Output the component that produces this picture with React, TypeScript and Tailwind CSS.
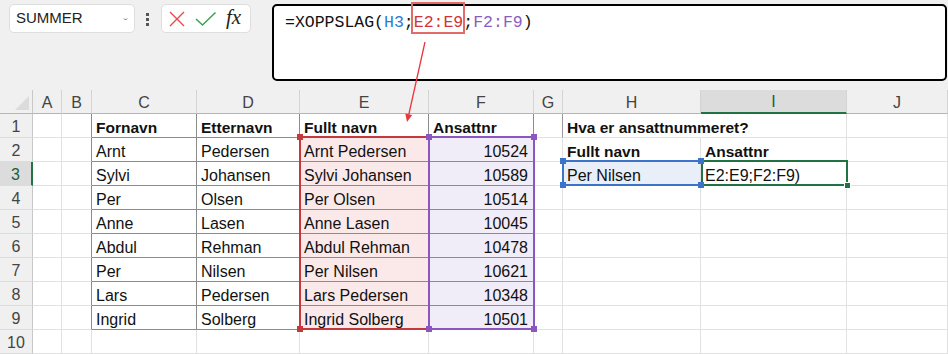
import React from 'react'

type Cell = { t?: string; b?: boolean; num?: boolean }

const cols = ['A', 'B', 'C', 'D', 'E', 'F', 'G', 'H', 'I', 'J']

const people = [
  ['Arnt', 'Pedersen', '10524'],
  ['Sylvi', 'Johansen', '10589'],
  ['Per', 'Olsen', '10514'],
  ['Anne', 'Lasen', '10045'],
  ['Abdul', 'Rehman', '10478'],
  ['Per', 'Nilsen', '10621'],
  ['Lars', 'Pedersen', '10348'],
  ['Ingrid', 'Solberg', '10501'],
]

function buildRows(): Cell[][] {
  const rows: Cell[][] = []
  rows.push([
    {}, {},
    { t: 'Fornavn', b: true },
    { t: 'Etternavn', b: true },
    { t: 'Fullt navn', b: true },
    { t: 'Ansattnr', b: true },
    {},
    { t: 'Hva er ansattnummeret?', b: true },
    {}, {},
  ])
  people.forEach(([first, last, nr], i) => {
    const row: Cell[] = [{}, {}, { t: first }, { t: last }, { t: `${first} ${last}` }, { t: nr, num: true }, {}, {}, {}, {}]
    if (i === 0) {
      row[7] = { t: 'Fullt navn', b: true }
      row[8] = { t: 'Ansattnr', b: true }
    }
    if (i === 1) {
      row[7] = { t: 'Per Nilsen' }
      row[8] = { t: 'E2:E9;F2:F9)' }
    }
    rows.push(row)
  })
  rows.push(Array.from({ length: 10 }, () => ({})))
  return rows
}

function cellClass(r: number, c: number) {
  // r is 1-based row, c is 0-based column (A = 0)
  const inTable = r >= 1 && r <= 9 && c >= 2 && c <= 5
  const leftOfTable = r >= 1 && r <= 9 && c === 1
  let right = 'border-r-[#e1e1e1]'
  let bottom = 'border-b-[#e1e1e1]'
  if (inTable) {
    right = 'border-r-[#8c8c8c]'
    bottom = 'border-b-[#8c8c8c]'
  }
  if (leftOfTable) right = 'border-r-[#8c8c8c]'
  if (r === 1 && c === 6) right = 'border-r-[#9a9a9a]'
  if (r === 1 && c === 7) right = 'border-r-transparent'
  let bg = ''
  if (r >= 2 && r <= 9 && c === 4) bg = 'bg-[#fbe9e9]'
  if (r >= 2 && r <= 9 && c === 5) bg = 'bg-[#f0ecf8]'
  if (r === 3 && c === 7) bg = 'bg-[#e8eff9]'
  return `${right} ${bottom} ${bg}`
}

function Handle({ className }: { className: string }) {
  return <div className={`absolute w-[6px] h-[6px] ${className}`} />
}

export default function App() {
  const rows = buildRows()

  return (
    <div className="relative w-[948px] h-[354px] overflow-hidden bg-white font-['Liberation_Sans',Arial,sans-serif] text-[#111]">
      {/* Formula bar */}
      <div className="h-[90px] bg-[#f0f0f0] flex items-start pt-[4px] pl-[9px]">
        <div className="w-[126px] h-[29px] bg-white border border-[#dedede] rounded-[5px] flex items-center pl-[6px] pr-[6px]">
          <span className="text-[15px] text-[#222] flex-1">SUMMER</span>
          <svg width="5" height="5" viewBox="0 0 5 5" className="mb-[-2px]">
            <path d="M1 1.5 L2.5 3 L4 1.5" fill="none" stroke="#666" strokeWidth="1" />
          </svg>
        </div>
        <div className="ml-[11px] mt-[9px] flex flex-col gap-[2px]">
          <div className="w-[3px] h-[3px] bg-[#555]" />
          <div className="w-[3px] h-[3px] bg-[#555]" />
          <div className="w-[3px] h-[3px] bg-[#555]" />
        </div>
        <div className="ml-[12px] w-[90px] h-[29px] bg-white border border-[#dedede] rounded-[5px] flex items-center pl-[7px]">
          <svg width="16" height="16" viewBox="0 0 16 16">
            <path d="M1 1 L15 15 M15 1 L1 15" stroke="#e5484d" strokeWidth="1.4" fill="none" />
          </svg>
          <svg width="22" height="16" viewBox="0 0 22 16" className="ml-[10px]">
            <path d="M1 8 L7.5 14 L20.5 1.5" stroke="#3ca256" strokeWidth="1.5" fill="none" />
          </svg>
          <span className="ml-[9px] font-['Liberation_Serif',serif] italic text-[21px] leading-none text-[#222] mt-[-2px]">fx</span>
        </div>
        <div className="ml-[21px] flex-1 mr-[1px] h-[77px] bg-white border-2 border-black rounded-[5px] pl-[11px] pt-[7px]">
          <div className="font-['Liberation_Mono',monospace] text-[16.5px] leading-[20px] whitespace-nowrap">
            <span>=XOPPSLAG(</span>
            <span className="text-[#2a7ad5]">H3</span>
            <span>;</span>
            <span className="relative text-[#d13438]">
              E2:E9
              <span className="absolute left-[-3px] top-[-11px] w-[54px] h-[32px] border-2 border-[#e36b6b]" />
            </span>
            <span>;</span>
            <span className="text-[#8b5cc4]">F2:F9</span>
            <span>)</span>
          </div>
        </div>
      </div>

      {/* Grid */}
      <div className="grid grid-cols-[33px_29px_30px_105px_103px_129px_105px_29px_138px_146px_101px] auto-rows-[24px]">
        <div className="bg-[#f0f0f0] border-r border-b border-r-[#c8c8c8] border-b-[#b5b5b5] flex items-end justify-end pr-[3px] pb-[3px]">
          <svg width="14" height="14" viewBox="0 0 14 14">
            <path d="M14 0 L14 14 L0 14 Z" fill="#dcdcdc" />
          </svg>
        </div>
        {cols.map((c) => (
          <div
            key={c}
            className={`border-r border-r-[#d4d4d4] flex items-end justify-center pb-px text-[16px] leading-[18px] ${
              c === 'I'
                ? 'bg-[#dcdcdc] border-b-2 border-b-[#217346] text-[#1d5e3a]'
                : 'bg-[#f0f0f0] border-b border-b-[#b5b5b5] text-[#444]'
            }`}
          >
            {c}
          </div>
        ))}
        {rows.map((row, ri) => {
          const r = ri + 1
          return (
            <React.Fragment key={r}>
              <div
                className={`border-b border-b-[#dcdcdc] flex items-end justify-center pb-px text-[16px] leading-[18px] ${
                  r === 3
                    ? 'bg-[#dcdcdc] border-r-2 border-r-[#217346] text-[#1d5e3a]'
                    : 'bg-[#f0f0f0] border-r border-r-[#c8c8c8] text-[#444]'
                }`}
              >
                {r}
              </div>
              {row.map((cell, c) => (
                <div
                  key={c}
                  className={`border-r border-b flex items-end whitespace-nowrap overflow-visible ${cellClass(r, c)} ${
                    cell.num ? 'justify-end pr-[5px]' : 'pl-[4px]'
                  }`}
                >
                  {cell.t && (
                    <span className={`leading-[18px] ${cell.b ? 'font-bold text-[15.5px]' : 'text-[16px]'}`}>{cell.t}</span>
                  )}
                </div>
              ))}
            </React.Fragment>
          )
        })}
      </div>

      {/* Range highlights drawn over the cells */}
      <div className="absolute left-[299px] top-[136px] w-[131px] h-[194px] border-2 border-[#c4393f]" />
      <div className="absolute left-[428px] top-[136px] w-[107px] h-[194px] border-2 border-[#8a57c0]" />
      <Handle className="left-[297px] top-[134px] bg-[#c4393f]" />
      <Handle className="left-[297px] top-[326px] bg-[#c4393f]" />
      <Handle className="left-[426px] top-[134px] bg-[#8a57c0]" />
      <Handle className="left-[531px] top-[134px] bg-[#8a57c0]" />
      <Handle className="left-[426px] top-[326px] bg-[#8a57c0]" />
      <Handle className="left-[531px] top-[326px] bg-[#8a57c0]" />

      <div className="absolute left-[562px] top-[160px] w-[141px] h-[26px] border-2 border-[#3a73c9]" />
      <div className="absolute left-[701px] top-[160px] w-[147px] h-[26px] border-2 border-[#217346]" />
      <Handle className="left-[560px] top-[158px] bg-[#3a73c9]" />
      <Handle className="left-[698px] top-[158px] bg-[#3a73c9]" />
      <Handle className="left-[560px] top-[182px] bg-[#3a73c9]" />
      <Handle className="left-[698px] top-[182px] bg-[#3a73c9]" />
      <div className="absolute left-[844px] top-[182px] w-[7px] h-[7px] bg-[#217346] border border-white" />

      {/* Arrow from the formula reference down to the range */}
      <svg className="absolute left-0 top-0 pointer-events-none" width="948" height="354">
        <line x1="425" y1="42" x2="408.8" y2="114.5" stroke="#e8383d" strokeWidth="1.3" />
        <polygon points="407,122 412.2,115 405.3,113.4" fill="#e8383d" />
      </svg>
    </div>
  )
}
